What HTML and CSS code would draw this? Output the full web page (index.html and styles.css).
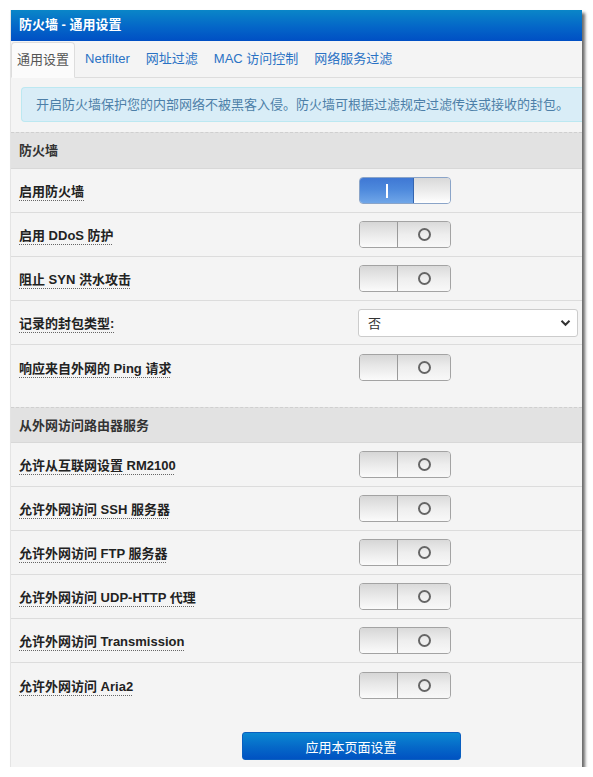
FILE: index.html
```html
<!DOCTYPE html>
<html lang="zh-CN">
<head>
<meta charset="utf-8">
<title>防火墙 - 通用设置</title>
<link rel="stylesheet" href="styles.css">
</head>
<body>
<div class="panel">
  <div class="titlebar">防火墙 - 通用设置</div>
  <div class="tabs">
    <span class="tab active">通用设置</span>
    <span class="tab">Netfilter</span>
    <span class="tab">网址过滤</span>
    <span class="tab">MAC 访问控制</span>
    <span class="tab">网络服务过滤</span>
  </div>
  <div class="alert">开启防火墙保护您的内部网络不被黑客入侵。防火墙可根据过滤规定过滤传送或接收的封包。</div>

  <div class="section">防火墙</div>
  <div class="row"><span class="label">启用防火墙</span><div class="switch on"><span class="track"><i class="bar"></i></span><span class="knob"></span></div></div>
  <div class="row"><span class="label">启用 DDoS 防护</span><div class="switch off"><span class="knob"></span><span class="track"><i class="ring"></i></span></div></div>
  <div class="row"><span class="label">阻止 SYN 洪水攻击</span><div class="switch off"><span class="knob"></span><span class="track"><i class="ring"></i></span></div></div>
  <div class="row"><span class="label">记录的封包类型:</span><div class="select"><span>否</span><svg class="chev" width="11" height="8" viewBox="0 0 11 8"><path d="M1.5 1.8 L5.5 5.8 L9.5 1.8" fill="none" stroke="#333" stroke-width="2"/></svg></div></div>
  <div class="row last"><span class="label">响应来自外网的 Ping 请求</span><div class="switch off"><span class="knob"></span><span class="track"><i class="ring"></i></span></div></div>

  <div class="section second">从外网访问路由器服务</div>
  <div class="row"><span class="label">允许从互联网设置 RM2100</span><div class="switch off"><span class="knob"></span><span class="track"><i class="ring"></i></span></div></div>
  <div class="row"><span class="label">允许外网访问 SSH 服务器</span><div class="switch off"><span class="knob"></span><span class="track"><i class="ring"></i></span></div></div>
  <div class="row"><span class="label">允许外网访问 FTP 服务器</span><div class="switch off"><span class="knob"></span><span class="track"><i class="ring"></i></span></div></div>
  <div class="row"><span class="label">允许外网访问 UDP-HTTP 代理</span><div class="switch off"><span class="knob"></span><span class="track"><i class="ring"></i></span></div></div>
  <div class="row"><span class="label">允许外网访问 Transmission</span><div class="switch off"><span class="knob"></span><span class="track"><i class="ring"></i></span></div></div>
  <div class="row last"><span class="label">允许外网访问 Aria2</span><div class="switch off"><span class="knob"></span><span class="track"><i class="ring"></i></span></div></div>

  <div class="actions"><button class="apply">应用本页面设置</button></div>
</div>
</body>
</html>
```
FILE: styles.css
```css
* { box-sizing: border-box; }
html, body { margin: 0; padding: 0; background: #fff; }
body {
  font-family: "Liberation Sans", Arial, "Noto Sans CJK SC", sans-serif;
  font-size: 13px;
  color: #333;
  padding: 10px 0 0 10px;
}
.panel {
  width: 572px;
  background: #f4f4f4;
  border-left: 1px solid #e4e4e4;
  box-shadow: 3px 3px 3px #6a6a6a;
  padding-bottom: 3px;
}
.titlebar {
  height: 31px;
  line-height: 30px;
  padding-left: 8px;
  color: #fff;
  font-weight: bold;
  background: linear-gradient(to bottom, #0a86c8 0%, #0466c8 55%, #004fc4 100%);
}
.tabs {
  display: flex;
  align-items: flex-end;
  height: 37px;
  border-bottom: 1px solid #dddddd;
}
.tab {
  display: block;
  height: 35px;
  line-height: 34px;
  padding: 0 8px;
  color: #2a72c4;
}
.tab:nth-child(2) { padding-left: 10px; }
.tab.active {
  color: #555;
  background: #fbfbfb;
  border: 1px solid #dddddd;
  border-bottom-color: #fbfbfb;
  border-radius: 4px 4px 0 0;
  margin-bottom: -1px;
  height: 36px;
  padding: 0 5px 0 5px;
}
.alert {
  margin: 9px 0 10px 10px;
  height: 35px;
  line-height: 33px;
  padding-left: 14px;
  background: #d9edf7;
  border: 1px solid #bce8f1;
  border-right: none;
  border-radius: 4px 0 0 4px;
  color: #4d7fa8;
  white-space: nowrap;
  overflow: hidden;
}
.section {
  height: 37px;
  line-height: 36px;
  padding-left: 8px;
  background: #e2e2e2;
  border-top: 1px dashed #cfcfcf;
  border-bottom: 1px solid #d8d8d8;
  font-weight: bold;
  color: #333;
}
.section.second { margin-top: 18px; height: 36px; line-height: 35px; }
.row {
  display: flex;
  align-items: center;
  height: 44px;
  border-bottom: 1px solid #dcdcdc;
}
.row.last { border-bottom: none; }
.label {
  flex: 0 0 auto;
  margin-right: auto;
  padding-left: 8px;
  font-weight: bold;
  color: #222;
  text-decoration: underline dotted #666;
  text-underline-offset: 4px;
  text-decoration-thickness: 1px;
}
.switch { margin-right: 131px; }
.select { margin-right: 4px; }
.switch {
  display: flex;
  width: 92px;
  height: 27px;
  border: 1px solid #a3a3a3;
  border-radius: 4px;
  overflow: hidden;
  background: #eee;
}
.switch.off .knob {
  width: 38px;
  background: linear-gradient(to bottom, #d6d6d6 0%, #e8e8e8 45%, #fbfbfb 100%);
  border-right: 1px solid #9a9a9a;
}
.switch.off .track {
  flex: 1;
  display: flex;
  align-items: center;
  justify-content: center;
  background: linear-gradient(to bottom, #dadada 0%, #eeeeee 50%, #f8f8f8 100%);
}
.ring {
  display: block;
  width: 13px;
  height: 13px;
  border: 2px solid #666;
  border-radius: 50%;
}
.switch.on { border-color: #8aa4c8; }
.switch.on .track {
  width: 54px;
  display: flex;
  align-items: center;
  justify-content: center;
  background: linear-gradient(to bottom, #3f78d4 0%, #4d89dc 45%, #70a6e8 100%);
  border-right: 1px solid #3566b0;
}
.bar {
  display: block;
  width: 2px;
  height: 14px;
  background: #fff;
}
.switch.on .knob {
  flex: 1;
  background: linear-gradient(to bottom, #d9d9d9 0%, #ebebeb 50%, #ffffff 100%);
}
.select {
  display: flex;
  align-items: center;
  justify-content: space-between;
  width: 220px;
  height: 28px;
  background: #fff;
  border: 1px solid #cccccc;
  border-radius: 3px;
  padding: 0 6px 0 9px;
  color: #333;
}
.chev { margin-top: 1px; }
.actions {
  display: flex;
  justify-content: center;
  padding-top: 25px;
  height: 57px;
}
.apply {
  width: 219px;
  height: 28px;
  margin-left: 109px;
  border: 1px solid #0a5fbf;
  border-radius: 3px;
  color: #fff;
  font-family: "Liberation Sans", Arial, "Noto Sans CJK SC", sans-serif;
  font-size: 13px;
  background: linear-gradient(to bottom, #0b88d2 0%, #0568c8 55%, #0052c2 100%);
  padding: 0;
}
```
